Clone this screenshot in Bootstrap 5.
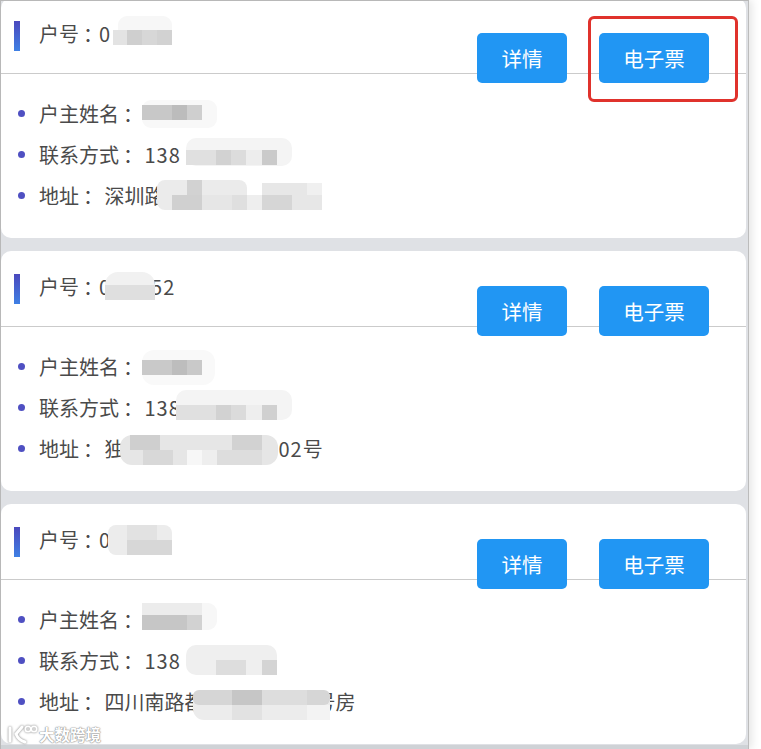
<!DOCTYPE html>
<html lang="zh-CN">
<head>
<meta charset="utf-8">
<title>户号列表</title>
<link href="https://cdn.jsdelivr.net/npm/bootstrap@5.3.0/dist/css/bootstrap.min.css" rel="stylesheet">
<style>
body{background:#fff;font-family:"Noto Sans CJK SC","Liberation Sans",sans-serif;color:#4a4a4a;overflow:hidden}
.screen-frame{position:relative;width:749px;height:749px;overflow:hidden;background:#dfe1e5;border-top:1px solid #b8b8b8;border-left:1px solid #b8b8b8;border-right:1px solid #bcbcbc;box-shadow:3px 0 8px rgba(0,0,0,.1);padding-right:2px}
.shot-edge{position:absolute;left:0;right:0;bottom:0;height:4px;background:#cfd2d6}
.ticket-stack{margin-top:-3px;gap:13px}
.ticket{position:relative;height:240px;border:0;border-radius:10px;background:#fff;color:#4a4a4a;font-size:20px}
.ticket-head{height:76px;padding:23px 37px 0 13px;border-bottom:1px solid #cbcbcb}
.head-bar{width:6px;height:30px;background:linear-gradient(#4a48bd,#3f80e4)}
.head-title{margin-left:19px;line-height:26px;letter-spacing:1px}
.mid-colon{font-family:"Noto Sans CJK TC",sans-serif;letter-spacing:-4px;padding-left:4px}
.ticket-actions{margin-top:12px;gap:32px}
.ticket-btn{height:50px;padding:0;font-size:20.5px;line-height:47px;border-radius:5px;border:0;background:#2196f3;color:#fff}
.btn-detail{width:90px}
.btn-ticket{width:110px}
.info-list{padding:19px 0 0 17px;margin:0;list-style:none}
.info-list li{display:flex;align-items:center;height:41px;white-space:pre;letter-spacing:1px}
.info-list li::before{content:"";flex:none;width:7px;height:7px;margin-right:14px;border-radius:50%;background:#4f50c2}
.cjk-run{letter-spacing:0}
.gap-b{display:inline-block;width:154px}
.gap-c{display:inline-block;width:111px}
.gap-d{display:inline-block;width:40px}
.mosaic{position:absolute;left:0;top:0;width:746px;height:240px;pointer-events:none;filter:blur(.6px)}
.red-mark{position:absolute;left:587px;top:18px;width:150px;height:86px;border:3px solid #e0322c;border-radius:6px;pointer-events:none}
.watermark{position:absolute;left:6px;top:722px;display:flex;align-items:center;gap:0;pointer-events:none}
.watermark-logo{filter:drop-shadow(0 0 1px #777)}
.watermark-text{font-size:15.5px;line-height:22px;font-weight:700;color:#fff;text-shadow:0 0 1px #8d8d8d,0 0 1px #8d8d8d,0 0 2px #aaa}
</style>
</head>
<body>
<div class="screen-frame">
  <div class="ticket-stack d-flex flex-column">

    <div class="card ticket">
      <div class="ticket-head d-flex justify-content-between align-items-start">
        <div class="d-flex align-items-start"><span class="head-bar"></span><span class="head-title"><span class="cjk-run">户号</span><span class="mid-colon">：</span>0</span></div>
        <div class="ticket-actions d-flex"><button class="btn ticket-btn btn-detail">详情</button><button class="btn ticket-btn btn-ticket">电子票</button></div>
      </div>
      <ul class="info-list">
        <li><span><span class="cjk-run">户主姓名</span><span class="mid-colon">：</span></span></li>
        <li><span><span class="cjk-run">联系方式</span><span class="mid-colon">：</span> 138</span></li>
        <li><span><span class="cjk-run">地址</span><span class="mid-colon">：</span> <span class="cjk-run">深圳路</span></span></li>
      </ul>
      <svg class="mosaic" viewBox="1 -2 746 240" aria-hidden="true">
        <rect x="118" y="16" width="54" height="29" rx="9" fill="#f7f7f7"/>
        <rect x="113" y="30" width="14" height="15" fill="#e3e3e3"/><rect x="127" y="30" width="15" height="15" fill="#cfcfcf"/><rect x="142" y="30" width="15" height="15" fill="#d7d7d7"/><rect x="157" y="30" width="15" height="15" fill="#d2d2d2"/>
        <rect x="142" y="100" width="75" height="28" rx="9" fill="#f8f8f8"/>
        <rect x="142" y="105" width="30" height="15" fill="#c8c8c8"/><rect x="172" y="105" width="15" height="15" fill="#bcbcbc"/><rect x="187" y="105" width="15" height="15" fill="#cfcfcf"/>
        <rect x="186" y="138" width="106" height="28" rx="10" fill="#f4f4f4"/>
        <rect x="186" y="150" width="30" height="15" fill="#e0e0e0"/><rect x="216" y="150" width="15" height="15" fill="#d2d2d2"/><rect x="231" y="150" width="15" height="15" fill="#dcdcdc"/><rect x="246" y="150" width="16" height="15" fill="#ededed"/><rect x="262" y="150" width="15" height="15" fill="#cacaca"/>
        <rect x="157" y="180" width="90" height="30" rx="8" fill="#ebebeb"/>
        <rect x="172" y="195" width="30" height="15" fill="#d0d0d0"/><rect x="187" y="180" width="15" height="15" fill="#d2d2d2"/><rect x="202" y="195" width="30" height="15" fill="#e6e6e6"/><rect x="232" y="195" width="15" height="15" fill="#dfdfdf"/>
        <rect x="247" y="195" width="15" height="15" fill="#eeeeee"/>
        <rect x="262" y="183" width="60" height="27" fill="#e7e7e7"/><rect x="262" y="195" width="30" height="15" fill="#d6d6d6"/><rect x="307" y="183" width="15" height="12" fill="#f0f0f0"/>
      </svg>
      <div class="red-mark"></div>
    </div>

    <div class="card ticket">
      <div class="ticket-head d-flex justify-content-between align-items-start">
        <div class="d-flex align-items-start"><span class="head-bar"></span><span class="head-title"><span class="cjk-run">户号</span><span class="mid-colon">：</span>0<span class="gap-d"></span>52</span></div>
        <div class="ticket-actions d-flex"><button class="btn ticket-btn btn-detail">详情</button><button class="btn ticket-btn btn-ticket">电子票</button></div>
      </div>
      <ul class="info-list">
        <li><span><span class="cjk-run">户主姓名</span><span class="mid-colon">：</span></span></li>
        <li><span><span class="cjk-run">联系方式</span><span class="mid-colon">：</span> 138</span></li>
        <li><span><span class="cjk-run">地址</span><span class="mid-colon">：</span> <span class="cjk-run">独</span><span class="gap-b"></span>02<span class="cjk-run">号</span></span></li>
      </ul>
      <svg class="mosaic" viewBox="1 251 746 240" aria-hidden="true">
        <rect x="105" y="272" width="50" height="28" rx="13" fill="#f1f1f1"/>
        <rect x="105" y="285" width="50" height="15" fill="#dfdfdf"/>
        <rect x="142" y="350" width="73" height="35" rx="12" fill="#f9f9f9"/>
        <rect x="142" y="360" width="60" height="15" fill="#c9c9c9"/><rect x="172" y="360" width="15" height="15" fill="#bdbdbd"/>
        <rect x="176" y="390" width="116" height="30" rx="10" fill="#f4f4f4"/>
        <rect x="176" y="405" width="40" height="15" fill="#e0e0e0"/><rect x="216" y="405" width="15" height="15" fill="#d2d2d2"/><rect x="231" y="405" width="15" height="15" fill="#dbdbdb"/><rect x="246" y="405" width="16" height="15" fill="#eeeeee"/><rect x="262" y="405" width="15" height="15" fill="#d0d0d0"/>
        <rect x="120" y="435" width="158" height="30" rx="12" fill="#e6e6e6"/>
        <rect x="130" y="435" width="30" height="15" fill="#cfcfcf"/><rect x="143" y="450" width="30" height="15" fill="#d8d8d8"/><rect x="187" y="450" width="15" height="15" fill="#f7f7f7"/><rect x="202" y="450" width="15" height="15" fill="#eeeeee"/><rect x="232" y="435" width="30" height="15" fill="#d2d2d2"/><rect x="217" y="450" width="45" height="15" fill="#dddddd"/>
      </svg>
    </div>

    <div class="card ticket">
      <div class="ticket-head d-flex justify-content-between align-items-start">
        <div class="d-flex align-items-start"><span class="head-bar"></span><span class="head-title"><span class="cjk-run">户号</span><span class="mid-colon">：</span>0</span></div>
        <div class="ticket-actions d-flex"><button class="btn ticket-btn btn-detail">详情</button><button class="btn ticket-btn btn-ticket">电子票</button></div>
      </div>
      <ul class="info-list">
        <li><span><span class="cjk-run">户主姓名</span><span class="mid-colon">：</span></span></li>
        <li><span><span class="cjk-run">联系方式</span><span class="mid-colon">：</span> 138</span></li>
        <li><span><span class="cjk-run">地址</span><span class="mid-colon">：</span> <span class="cjk-run">四川南路都</span><span class="gap-c"></span><span class="cjk-run">号房</span></span></li>
      </ul>
      <svg class="mosaic" viewBox="1 504 746 240" aria-hidden="true">
        <rect x="108" y="525" width="64" height="30" rx="8" fill="#ececec"/>
        <rect x="127" y="540" width="45" height="15" fill="#d7d7d7"/><rect x="127" y="525" width="30" height="15" fill="#e2e2e2"/>
        <rect x="142" y="603" width="75" height="27" rx="9" fill="#f7f7f7"/>
        <rect x="142" y="603" width="60" height="12" fill="#ececec"/>
        <rect x="142" y="615" width="60" height="15" fill="#c6c6c6"/><rect x="187" y="615" width="15" height="15" fill="#d2d2d2"/>
        <rect x="186" y="645" width="91" height="30" rx="10" fill="#efefef"/>
        <rect x="216" y="660" width="30" height="15" fill="#dddddd"/><rect x="262" y="660" width="15" height="15" fill="#d4d4d4"/>
        <rect x="193" y="690" width="137" height="30" rx="11" fill="#ececec"/>
        <rect x="193" y="690" width="137" height="15" rx="6" fill="#d6d6d6"/><rect x="232" y="690" width="30" height="15" fill="#c6c6c6"/><rect x="232" y="705" width="30" height="15" fill="#e2e2e2"/><rect x="262" y="690" width="45" height="15" fill="#dddddd"/><rect x="307" y="705" width="23" height="15" fill="#f3f3f3"/>
      </svg>
    </div>
  </div>
  <div class="shot-edge"></div>
  <div class="watermark">
    <svg class="watermark-logo" width="32" height="22" viewBox="0 0 32 22" aria-hidden="true"><g fill="none" stroke="#fff" stroke-width="3" stroke-linecap="round"><path d="M3 5v13"/><path d="M15 4 9 11c2 5 5 7 9 8"/></g><circle cx="21" cy="6" r="2.800" fill="#fff" fill-opacity=".5" stroke="#fff" stroke-width="1.500"/><circle cx="27" cy="6" r="2.800" fill="#fff" fill-opacity=".5" stroke="#fff" stroke-width="1.500"/></svg>
    <span class="watermark-text">大数跨境</span>
  </div>
</div>
<script src="https://cdn.jsdelivr.net/npm/bootstrap@5.3.0/dist/js/bootstrap.bundle.min.js"></script>
</body>
</html>
